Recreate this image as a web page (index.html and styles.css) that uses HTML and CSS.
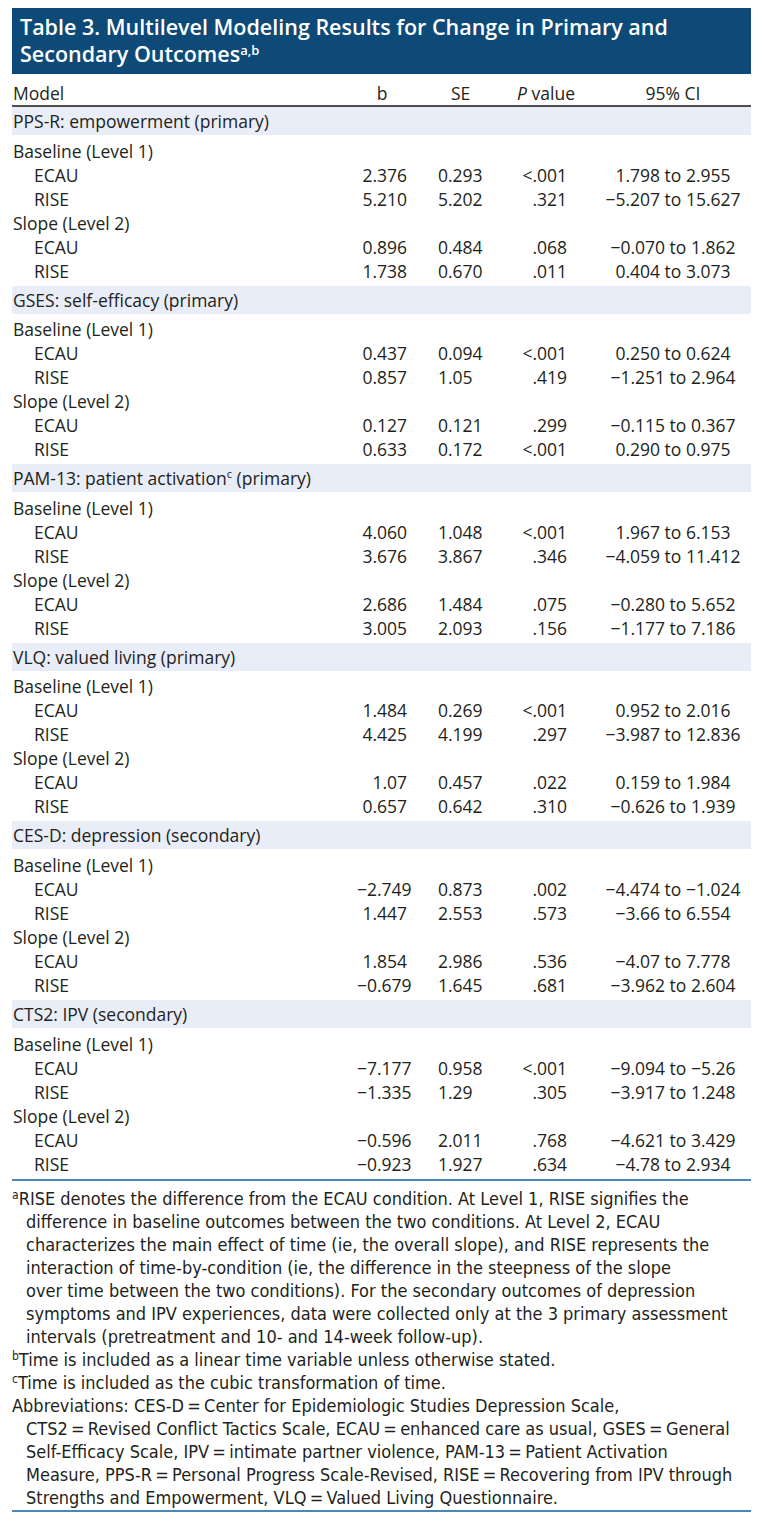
FILE: index.html
```html
<!DOCTYPE html>
<html>
<head>
<meta charset="utf-8">
<link rel="stylesheet" href="styles.css">
</head>
<body>
<div class="wrap">
  <div class="title">Table 3. Multilevel Modeling Results for Change in Primary and Secondary Outcomes<sup>a,b</sup></div>
  <table class="tbl">
    <colgroup>
      <col class="c-model"><col class="c-b"><col class="c-se"><col class="c-p"><col class="c-ci">
    </colgroup>
    <thead>
      <tr><th class="h-model">Model</th><th class="h-b">b</th><th class="h-se">SE</th><th class="h-p"><i>P</i> value</th><th class="h-ci">95% CI</th></tr>
    </thead>
    <tbody>
      <tr class="sec"><td colspan="5">PPS-R: empowerment (primary)</td></tr>
      <tr class="first"><td>Baseline (Level 1)</td><td></td><td></td><td></td><td></td></tr>
      <tr><td class="ind">ECAU</td><td class="b">2.376</td><td class="se">0.293</td><td class="p">&lt;.001</td><td class="ci">1.798 to 2.955</td></tr>
      <tr><td class="ind">RISE</td><td class="b">5.210</td><td class="se">5.202</td><td class="p">.321</td><td class="ci">−5.207 to 15.627</td></tr>
      <tr><td>Slope (Level 2)</td><td></td><td></td><td></td><td></td></tr>
      <tr><td class="ind">ECAU</td><td class="b">0.896</td><td class="se">0.484</td><td class="p">.068</td><td class="ci">−0.070 to 1.862</td></tr>
      <tr class="end"><td class="ind">RISE</td><td class="b">1.738</td><td class="se">0.670</td><td class="p">.011</td><td class="ci">0.404 to 3.073</td></tr>

      <tr class="sec"><td colspan="5">GSES: self-efficacy (primary)</td></tr>
      <tr class="first"><td>Baseline (Level 1)</td><td></td><td></td><td></td><td></td></tr>
      <tr><td class="ind">ECAU</td><td class="b">0.437</td><td class="se">0.094</td><td class="p">&lt;.001</td><td class="ci">0.250 to 0.624</td></tr>
      <tr><td class="ind">RISE</td><td class="b">0.857</td><td class="se">1.05</td><td class="p">.419</td><td class="ci">−1.251 to 2.964</td></tr>
      <tr><td>Slope (Level 2)</td><td></td><td></td><td></td><td></td></tr>
      <tr><td class="ind">ECAU</td><td class="b">0.127</td><td class="se">0.121</td><td class="p">.299</td><td class="ci">−0.115 to 0.367</td></tr>
      <tr class="end"><td class="ind">RISE</td><td class="b">0.633</td><td class="se">0.172</td><td class="p">&lt;.001</td><td class="ci">0.290 to 0.975</td></tr>

      <tr class="sec"><td colspan="5">PAM-13: patient activation<sup>c</sup> (primary)</td></tr>
      <tr class="first"><td>Baseline (Level 1)</td><td></td><td></td><td></td><td></td></tr>
      <tr><td class="ind">ECAU</td><td class="b">4.060</td><td class="se">1.048</td><td class="p">&lt;.001</td><td class="ci">1.967 to 6.153</td></tr>
      <tr><td class="ind">RISE</td><td class="b">3.676</td><td class="se">3.867</td><td class="p">.346</td><td class="ci">−4.059 to 11.412</td></tr>
      <tr><td>Slope (Level 2)</td><td></td><td></td><td></td><td></td></tr>
      <tr><td class="ind">ECAU</td><td class="b">2.686</td><td class="se">1.484</td><td class="p">.075</td><td class="ci">−0.280 to 5.652</td></tr>
      <tr class="end"><td class="ind">RISE</td><td class="b">3.005</td><td class="se">2.093</td><td class="p">.156</td><td class="ci">−1.177 to 7.186</td></tr>

      <tr class="sec"><td colspan="5">VLQ: valued living (primary)</td></tr>
      <tr class="first"><td>Baseline (Level 1)</td><td></td><td></td><td></td><td></td></tr>
      <tr><td class="ind">ECAU</td><td class="b">1.484</td><td class="se">0.269</td><td class="p">&lt;.001</td><td class="ci">0.952 to 2.016</td></tr>
      <tr><td class="ind">RISE</td><td class="b">4.425</td><td class="se">4.199</td><td class="p">.297</td><td class="ci">−3.987 to 12.836</td></tr>
      <tr><td>Slope (Level 2)</td><td></td><td></td><td></td><td></td></tr>
      <tr><td class="ind">ECAU</td><td class="b">1.07</td><td class="se">0.457</td><td class="p">.022</td><td class="ci">0.159 to 1.984</td></tr>
      <tr class="end"><td class="ind">RISE</td><td class="b">0.657</td><td class="se">0.642</td><td class="p">.310</td><td class="ci">−0.626 to 1.939</td></tr>

      <tr class="sec"><td colspan="5">CES-D: depression (secondary)</td></tr>
      <tr class="first"><td>Baseline (Level 1)</td><td></td><td></td><td></td><td></td></tr>
      <tr><td class="ind">ECAU</td><td class="b">−2.749</td><td class="se">0.873</td><td class="p">.002</td><td class="ci">−4.474 to −1.024</td></tr>
      <tr><td class="ind">RISE</td><td class="b">1.447</td><td class="se">2.553</td><td class="p">.573</td><td class="ci">−3.66 to 6.554</td></tr>
      <tr><td>Slope (Level 2)</td><td></td><td></td><td></td><td></td></tr>
      <tr><td class="ind">ECAU</td><td class="b">1.854</td><td class="se">2.986</td><td class="p">.536</td><td class="ci">−4.07 to 7.778</td></tr>
      <tr class="end"><td class="ind">RISE</td><td class="b">−0.679</td><td class="se">1.645</td><td class="p">.681</td><td class="ci">−3.962 to 2.604</td></tr>

      <tr class="sec"><td colspan="5">CTS2: IPV (secondary)</td></tr>
      <tr class="first"><td>Baseline (Level 1)</td><td></td><td></td><td></td><td></td></tr>
      <tr><td class="ind">ECAU</td><td class="b">−7.177</td><td class="se">0.958</td><td class="p">&lt;.001</td><td class="ci">−9.094 to −5.26</td></tr>
      <tr><td class="ind">RISE</td><td class="b">−1.335</td><td class="se">1.29</td><td class="p">.305</td><td class="ci">−3.917 to 1.248</td></tr>
      <tr><td>Slope (Level 2)</td><td></td><td></td><td></td><td></td></tr>
      <tr><td class="ind">ECAU</td><td class="b">−0.596</td><td class="se">2.011</td><td class="p">.768</td><td class="ci">−4.621 to 3.429</td></tr>
      <tr class="last"><td class="ind">RISE</td><td class="b">−0.923</td><td class="se">1.927</td><td class="p">.634</td><td class="ci">−4.78 to 2.934</td></tr>
    </tbody>
  </table>
  <div class="notes">
    <p class="fn"><sup>a</sup>RISE denotes the difference from the ECAU condition. At Level 1, RISE signifies the<br>difference in baseline outcomes between the two conditions. At Level 2, ECAU<br>characterizes the main effect of time (ie, the overall slope), and RISE represents the<br>interaction of time-by-condition (ie, the difference in the steepness of the slope<br>over time between the two conditions). For the secondary outcomes of depression<br>symptoms and IPV experiences, data were collected only at the 3 primary assessment<br>intervals (pretreatment and 10- and 14-week follow-up).</p>
    <p class="fn"><sup>b</sup>Time is included as a linear time variable unless otherwise stated.</p>
    <p class="fn"><sup>c</sup>Time is included as the cubic transformation of time.</p>
    <p class="fn abbr">Abbreviations: CES-D&#8239;=&#8239;Center for Epidemiologic Studies Depression Scale,<br>CTS2&#8239;=&#8239;Revised Conflict Tactics Scale, ECAU&#8239;=&#8239;enhanced care as usual, GSES&#8239;=&#8239;General<br>Self-Efficacy Scale, IPV&#8239;=&#8239;intimate partner violence, PAM-13&#8239;=&#8239;Patient Activation<br>Measure, PPS-R&#8239;=&#8239;Personal Progress Scale-Revised, RISE&#8239;=&#8239;Recovering from IPV through<br>Strengths and Empowerment, VLQ&#8239;=&#8239;Valued Living Questionnaire.</p>
  </div>
</div>
</body>
</html>
```
FILE: styles.css
```css
html, body {
  margin: 0;
  padding: 0;
  background: #ffffff;
}
body {
  font-family: "Open Sans", "Noto Sans", sans-serif;
  color: #231f20;
}
.wrap {
  width: 739px;
  margin: 8px 0 0 12px;
}
.title {
  background: #0d4a78;
  color: #ffffff;
  font-family: "Open Sans", sans-serif;
  font-weight: 600;
  font-size: 21.5px;
  line-height: 27px;
  padding: 5px 8px 7px 8px;
  height: 54px;
}
.title sup {
  font-size: 13px;
  line-height: 0;
  vertical-align: 7px;
}
.tbl {
  width: 739px;
  border-collapse: collapse;
  table-layout: fixed;
  font-size: 17.5px;
}
.c-model { width: 345px; }
.c-b { width: 50px; }
.c-se { width: 88px; }
.c-p { width: 80px; }
.c-ci { width: 176px; }
.tbl th {
  font-weight: 400;
  padding: 8px 0 1px 0;
  vertical-align: bottom;
  border-bottom: 2px solid #4f4f4f;
  line-height: 22px;
  white-space: nowrap;
}
.tbl th.h-model { text-align: left; padding-left: 1px; }
.tbl th.h-b { text-align: center; }
.tbl th.h-se { text-align: left; padding-left: 44px; }
.tbl th.h-p { text-align: right; padding-right: 0; }
.tbl th.h-ci { text-align: center; padding-left: 20px; }
.tbl td {
  padding: 0;
  height: 24px;
  line-height: 22px;
  vertical-align: top;
  white-space: nowrap;
}
.tbl td:first-child { padding-left: 1px; }
.tbl tr.sec td {
  background: #e9edf7;
  height: 28px;
  vertical-align: middle;
  line-height: 22px;
}
.tbl tr.sec sup {
  font-size: 11px;
  line-height: 0;
  vertical-align: 7px;
}
.tbl tr.first td {
  height: 28.6px;
  padding-top: 4.6px;
  box-sizing: border-box;
  vertical-align: top;
}
.tbl tr.end td {
  height: 26px;
  box-sizing: border-box;
}
.tbl td.ind { padding-left: 22px; }
.tbl td.b { text-align: right; }
.tbl td.se { padding-left: 31px; text-align: left; }
.tbl td.p { text-align: right; padding-right: 8px; }
.tbl td.ci { text-align: center; padding-left: 20px; }
.tbl tr.last td {
  border-bottom: 2px solid #4a87b5;
  height: 26px;
}
.notes {
  padding-top: 6px;
  border-bottom: 2px solid #4a87b5;
  padding-bottom: 1px;
  font-family: "Liberation Sans Narrow", "DejaVu Sans Condensed", sans-serif;
  font-size: 18px;
  line-height: 23px;
}
.fn {
  margin: 0;
  padding-left: 14px;
  text-indent: -14px;
  white-space: nowrap;
}
.fn sup {
  font-size: 12px;
  line-height: 0;
  vertical-align: 6px;
}
```
